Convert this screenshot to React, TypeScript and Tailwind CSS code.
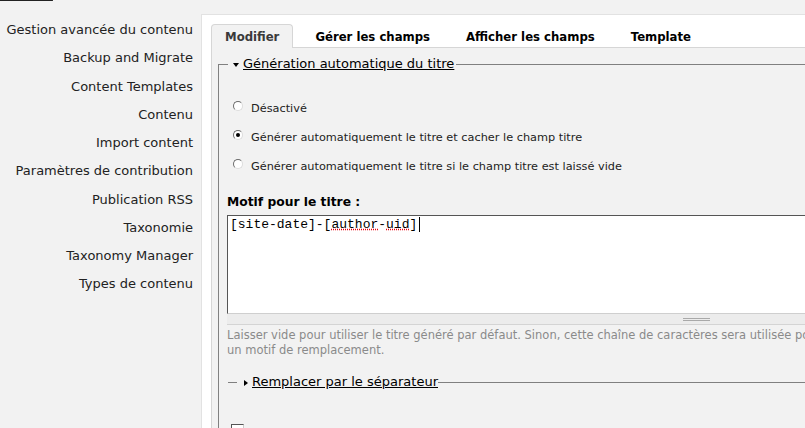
import React from 'react'

const sideLinks = [
  'Gestion avancée du contenu',
  'Backup and Migrate',
  'Content Templates',
  'Contenu',
  'Import content',
  'Paramètres de contribution',
  'Publication RSS',
  'Taxonomie',
  'Taxonomy Manager',
  'Types de contenu',
]

const tabs = ['Modifier', 'Gérer les champs', 'Afficher les champs', 'Template']

const options = [
  { label: 'Désactivé', checked: false },
  { label: 'Générer automatiquement le titre et cacher le champ titre', checked: true },
  { label: 'Générer automatiquement le titre si le champ titre est laissé vide', checked: false },
]

// bouton radio façon Windows classique
function Radio({ checked }: { checked?: boolean }) {
  return (
    <span className="mb-[8px] flex h-[10px] w-[10px] shrink-0 items-center justify-center rounded-full border border-t-[#6b6b6b] border-l-[#6b6b6b] border-r-[#dcdcdc] border-b-[#dcdcdc] bg-white">
      {checked && <span className="h-[4px] w-[4px] rounded-full bg-black" />}
    </span>
  )
}

export default function App() {
  return (
    <div className="h-[428px] w-[805px] overflow-hidden bg-[#f2f2f2] font-['DejaVu_Sans',Verdana,sans-serif] text-[#222]">
      {/* fil d'ariane coupé en haut */}
      <div className="h-[3px] overflow-hidden">
        <a className="-mt-[13px] block w-[57px] overflow-hidden whitespace-nowrap text-[13px] leading-[16px] underline">contenu</a>
      </div>

      <div className="flex">
        {/* Menu de gauche */}
        <div className="w-[201px] shrink-0 pr-[8px] pt-[13px] text-right text-[13px] leading-[28.25px]">
          {sideLinks.map((l) => (
            <div key={l} className="whitespace-nowrap">{l}</div>
          ))}
        </div>

        {/* Panneau principal */}
        <div className="mt-[11px] w-[1000px] shrink-0 border-l border-t border-[#e2e2e2] bg-white pl-[9px]">
          <div className="flex h-[33px] items-end border-b border-[#d6d6d6]">
            {tabs.map((t, i) => (
              <div
                key={t}
                className={
                  i === 0
                    ? '-mb-px mr-[8px] flex h-[24px] items-center rounded-t-[4px] border border-b-0 border-[#d6d6d6] bg-[#f2f2f2] px-[13px] pt-[3px] text-[11.7px] font-bold text-[#3a3a3a]'
                    : '-mb-px mr-[8px] flex h-[24px] items-center px-[14px] pt-[3px] text-[11.7px] font-bold text-black'
                }
              >
                {t}
              </div>
            ))}
          </div>

          <div className="border-l border-[#d6d6d6] bg-[#f2f2f2] pl-[6px] pt-[8px] pb-[40px]">
            <fieldset className="border-l border-t border-[#808080] pl-[9px]">
              <legend className="pl-[5px] pr-[2px] text-[13px] leading-[16px]">
                <span className="mr-[4px] inline-block border-x-[3px] border-t-[4px] border-x-transparent border-t-black align-middle" />
                <a className="text-black underline">Génération automatique du titre</a>
              </legend>

              <div className="ml-[5px] mt-[23px]">
                {options.map((o) => (
                  <div key={o.label} className="flex h-[29px] items-center gap-[8px] whitespace-nowrap text-[11.3px]">
                    <Radio checked={o.checked} />
                    <span>{o.label}</span>
                  </div>
                ))}
              </div>

              <div className="-ml-px mt-[12px] text-[12.3px] font-bold leading-[16px] text-black">Motif pour le titre :</div>

              <div className="-ml-px mt-[5px] w-[939px]">
                <div className="h-[99px] border border-t-[#555] border-l-[#555] border-r-[#cfcfcf] border-b-[#cfcfcf] bg-white pl-[2px] pt-[1px] font-['Liberation_Mono',monospace] text-[13px] leading-[16px] text-black">
                  [site-date]-[<span className="underline decoration-red-600 decoration-dotted">author</span>-<span className="underline decoration-red-600 decoration-dotted">uid</span>]
                  <span className="ml-[2px] inline-block h-[15px] w-px bg-black align-middle" />
                </div>
                <div className="flex h-[11px] items-center justify-center border-b border-[#d4d4d4] bg-[#ececec]">
                  <div className="h-[3px] w-[27px] border-y border-[#a9a9a9]" />
                </div>
              </div>

              <div className="-ml-px mt-[3px] whitespace-nowrap text-[11.5px] leading-[15px] text-[#8a8a8a]">
                Laisser vide pour utiliser le titre généré par défaut. Sinon, cette chaîne de caractères sera utilisée pour le titre. Utilisez la syntaxe [token] si vous voulez insérer
                <br />
                un motif de remplacement.
              </div>

              <fieldset className="mt-[16px] border-t border-[#808080] pl-[9px]">
                <legend className="pl-[7px] text-[13px] leading-[16px]">
                  <span className="mr-[4px] inline-block border-y-[3.5px] border-l-[4px] border-y-transparent border-l-black align-middle" />
                  <a className="text-black underline">Remplacer par le séparateur</a>
                </legend>
              </fieldset>

              <div className="ml-[3px] mt-[34px] h-[13px] w-[13px] border border-t-[#555] border-l-[#555] border-r-[#ccc] border-b-[#ccc] bg-white" />
            </fieldset>
          </div>
        </div>
      </div>
    </div>
  )
}
